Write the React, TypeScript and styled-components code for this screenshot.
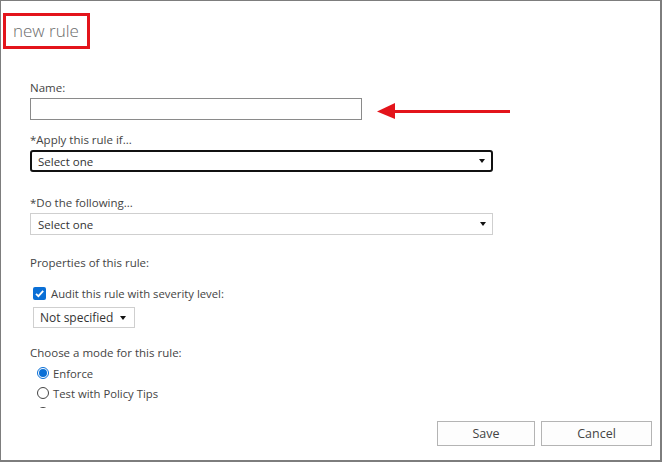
import React, { useState } from "react";
import styled, { createGlobalStyle } from "styled-components";

const GlobalStyle = createGlobalStyle`
  body {
    margin: 0;
    background: #ffffff;
    font-family: "Open Sans", "Noto Sans", Arial, sans-serif;
    color: #444444;
  }
`;

const Window = styled.div`
  width: 662px;
  height: 462px;
  box-sizing: border-box;
  border-style: solid;
  border-color: #7d7d7d;
  border-width: 1px 2px 2px 1px;
  background: #ffffff;
  display: flex;
  flex-direction: column;
  overflow: hidden;
`;

const Header = styled.div`
  padding: 12px 0 0 2px;
  display: flex;
`;

const TitleBox = styled.div`
  box-sizing: border-box;
  width: 87px;
  height: 36px;
  border: 3px solid #e3141b;
  padding-left: 7px;
  font-size: 17px;
  font-weight: 300;
  line-height: 30px;
  color: #6b6b6b;
  white-space: nowrap;
`;

const Body = styled.div`
  flex: 1;
  min-height: 0;
  overflow: hidden;
  padding-left: 29px;
`;

const Label = styled.div<{ $top: number }>`
  margin-top: ${(p) => p.$top}px;
  margin-bottom: 2px;
  font-size: 11.5px;
  line-height: 16px;
  color: #444444;
`;

const NameRow = styled.div`
  display: flex;
  align-items: flex-start;
  gap: 14px;
`;

const TextInput = styled.input`
  box-sizing: border-box;
  width: 332px;
  height: 22px;
  margin: 0;
  border: 1px solid #8a8a8a;
  padding: 0 6px;
  font-family: inherit;
  font-size: 11.5px;
  outline: none;
`;

const SelectBox = styled.div<{ $width: number; $focused?: boolean }>`
  box-sizing: border-box;
  width: ${(p) => p.$width}px;
  height: 22px;
  display: flex;
  align-items: center;
  justify-content: space-between;
  padding: 0 6px 0 ${(p) => (p.$focused ? 6 : 7)}px;
  border: ${(p) => (p.$focused ? "2px solid #111111" : "1px solid #cfcfcf")};
  border-radius: ${(p) => (p.$focused ? 3 : 0)}px;
  font-size: 11.5px;
  color: #333333;
  background: #ffffff;
  white-space: nowrap;
`;

const Caret = styled.span`
  width: 0;
  height: 0;
  border-left: 3.5px solid transparent;
  border-right: 3.5px solid transparent;
  border-top: 4px solid #111111;
`;

const CheckRow = styled.label`
  margin-top: 14px;
  margin-left: 3px;
  height: 17px;
  display: flex;
  align-items: center;
  gap: 5px;
  font-size: 11.3px;
  color: #444444;
`;

const CheckMark = styled.span`
  width: 13px;
  height: 13px;
  border-radius: 2px;
  background: #0a6fd6;
  display: flex;
  align-items: center;
  justify-content: center;
`;

const SeveritySelect = styled(SelectBox)`
  margin: 5px 0 0 3px;
  height: 21px;
  font-size: 12px;
  padding: 0 8px 0 6px;
`;

const RadioList = styled.div`
  display: flex;
  flex-direction: column;
  margin-top: 1px;
  margin-left: 7px;
`;

const RadioRow = styled.label`
  height: 20px;
  display: flex;
  align-items: center;
  gap: 4px;
  font-size: 11.3px;
  color: #444444;
`;

const RadioDot = styled.span<{ $on: boolean }>`
  box-sizing: border-box;
  width: 12px;
  height: 12px;
  border-radius: 50%;
  border: 1px solid ${(p) => (p.$on ? "#0a6fd6" : "#444444")};
  background: #ffffff;
  display: flex;
  align-items: center;
  justify-content: center;

  &::after {
    content: "";
    width: 8px;
    height: 8px;
    border-radius: 50%;
    background: ${(p) => (p.$on ? "#0a6fd6" : "transparent")};
  }
`;

const Footer = styled.div`
  display: flex;
  justify-content: flex-end;
  gap: 6px;
  padding: 13px 8px 14px 0;
`;

const Button = styled.button<{ $width: number }>`
  box-sizing: border-box;
  width: ${(p) => p.$width}px;
  height: 25px;
  border: 1px solid #b4b4b4;
  background: #fdfdfd;
  font-family: inherit;
  font-size: 12.5px;
  color: #444444;
  padding: 0;
`;

const Arrow = () => (
  <svg width="136" height="22" viewBox="0 0 136 22">
    <line x1="14" y1="13.5" x2="134" y2="13.5" stroke="#e3141b" strokeWidth="3" />
    <polygon points="1,13.5 19,5 19,21" fill="#e3141b" />
  </svg>
);

// the list is cut off by the panel: only the top of the third option shows
const modes = ["Enforce", "Test with Policy Tips", ""];

const App: React.FC = () => {
  const [name, setName] = useState("");
  const [mode, setMode] = useState(0);

  // 이름 입력
  const onChangeName = (event: React.ChangeEvent<HTMLInputElement>) => {
    setName(event.target.value);
  };

  return (
    <>
      <GlobalStyle />
      <Window>
        <Header>
          <TitleBox>new rule</TitleBox>
        </Header>
        <Body>
          <Label $top={31}>Name:</Label>
          <NameRow>
            <TextInput value={name} onChange={onChangeName} />
            <Arrow />
          </NameRow>

          <Label $top={12}>*Apply this rule if...</Label>
          <SelectBox $width={463} $focused>
            <span>Select one</span>
            <Caret />
          </SelectBox>

          <Label $top={23}>*Do the following...</Label>
          <SelectBox $width={463}>
            <span>Select one</span>
            <Caret />
          </SelectBox>

          <Label $top={20}>Properties of this rule:</Label>
          <CheckRow>
            <CheckMark>
              <svg width="11" height="11" viewBox="0 0 11 11">
                <path d="M2 5.8 L4.4 8.2 L9.2 2.8" fill="none" stroke="#fff" strokeWidth="1.8" />
              </svg>
            </CheckMark>
            Audit this rule with severity level:
          </CheckRow>
          <SeveritySelect $width={102}>
            <span>Not specified</span>
            <Caret />
          </SeveritySelect>

          <Label $top={17}>Choose a mode for this rule:</Label>
          <RadioList>
            {modes.map((m, i) => (
              <RadioRow key={i} onClick={() => setMode(i)}>
                <RadioDot $on={mode === i} />
                {m}
              </RadioRow>
            ))}
          </RadioList>
        </Body>
        <Footer>
          <Button $width={98}>Save</Button>
          <Button $width={111}>Cancel</Button>
        </Footer>
      </Window>
    </>
  );
};

export default App;
